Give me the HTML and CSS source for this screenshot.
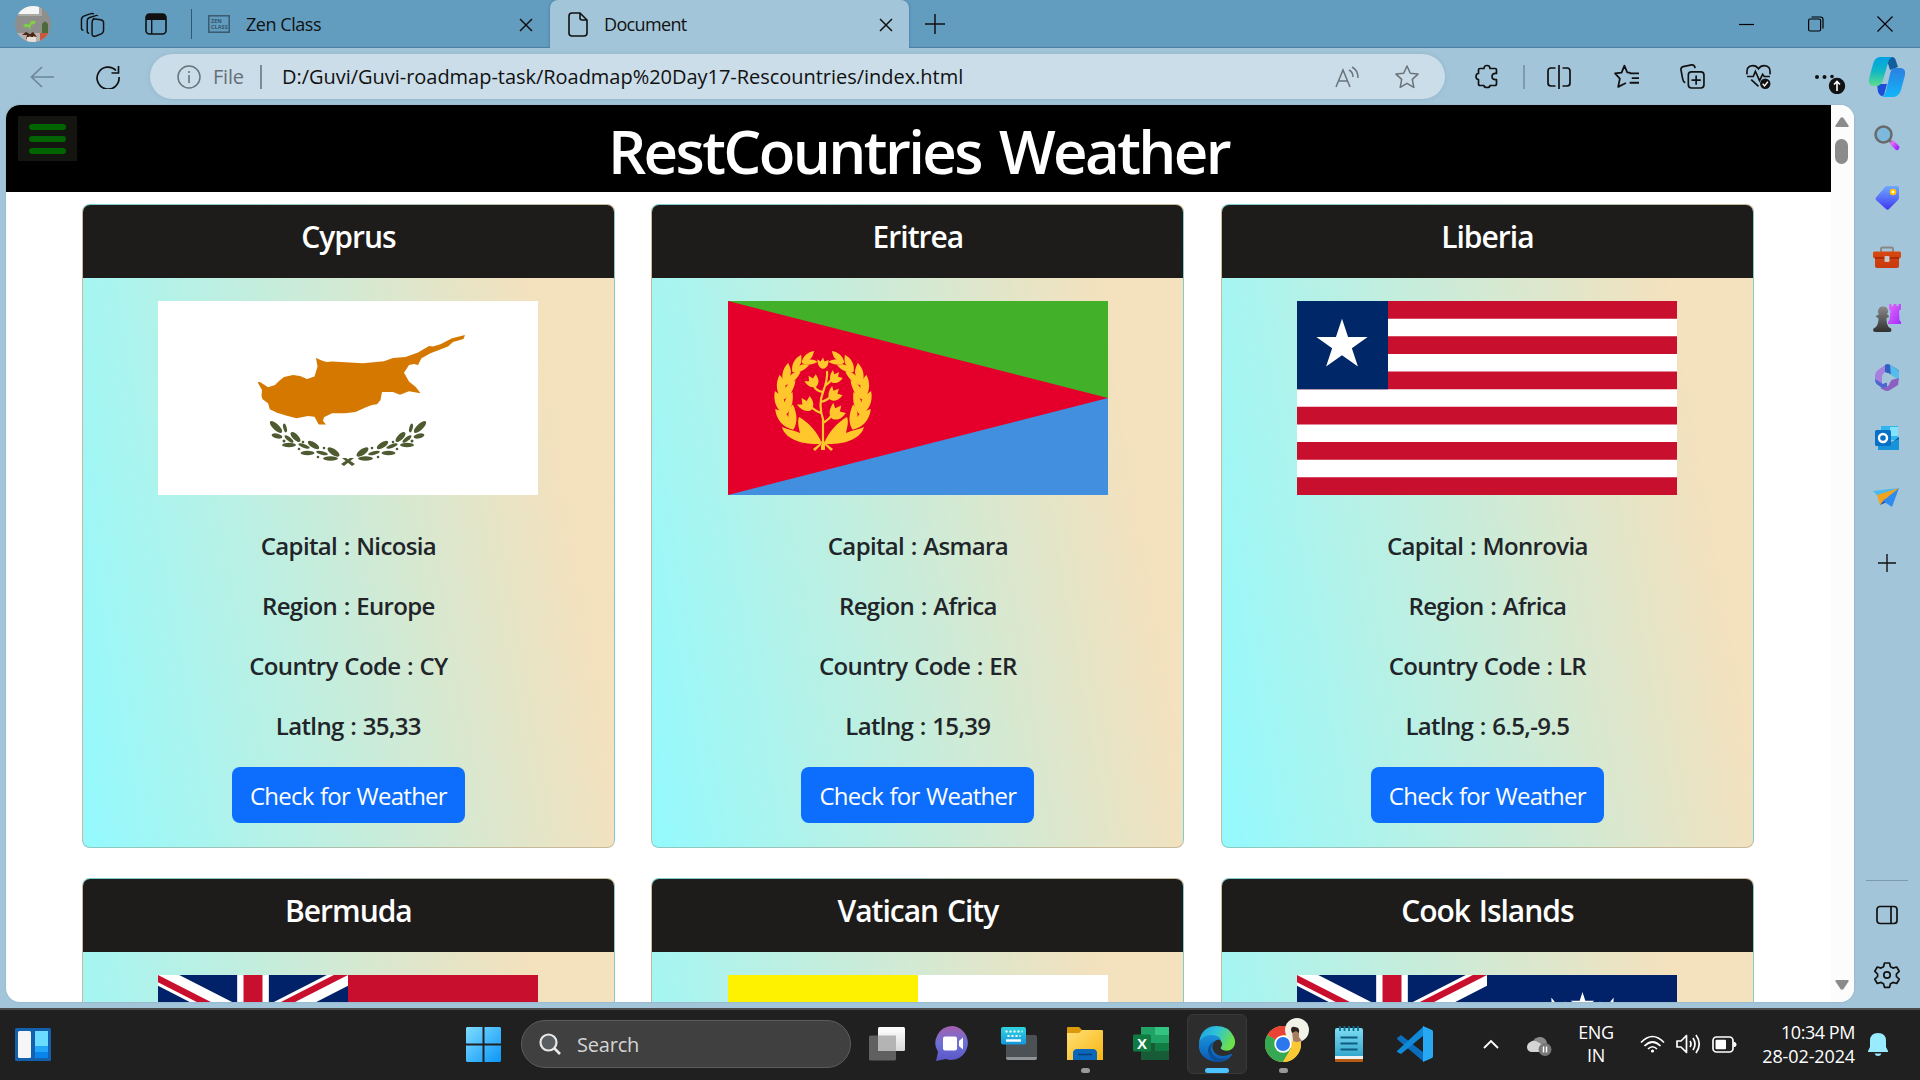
FILE: index.html
```
<!DOCTYPE html>
<html lang="en">
<head>
<meta charset="utf-8">
<title>Document</title>
<link rel="stylesheet" href="styles.css">
</head>
<body>
<svg class="defs" aria-hidden="true">
  <defs>
    <linearGradient id="g-task" x1="0" y1="0" x2="0" y2="1"><stop offset="0" stop-color="#fff"/><stop offset="1" stop-color="#d8d8d8"/></linearGradient>
    <linearGradient id="g-win" x1="0" y1="0" x2="1" y2="1"><stop offset="0" stop-color="#7fdcff"/><stop offset="1" stop-color="#0a96f8"/></linearGradient>
    <linearGradient id="g-teams" x1="0" y1="0" x2="0" y2="1"><stop offset="0" stop-color="#a45fae"/><stop offset=".5" stop-color="#6d70d6"/><stop offset="1" stop-color="#5a55c8"/></linearGradient>
    <linearGradient id="g-key" x1="0" y1="0" x2="0" y2="1"><stop offset="0" stop-color="#2fd3de"/><stop offset="1" stop-color="#1697dd"/></linearGradient>
    <linearGradient id="g-folder" x1="0" y1="0" x2="1" y2="1"><stop offset="0" stop-color="#ffe07a"/><stop offset="1" stop-color="#f8b60e"/></linearGradient>
    <linearGradient id="g-edge" x1="0" y1="0" x2="1" y2=".4"><stop offset="0" stop-color="#1b9de2"/><stop offset=".5" stop-color="#2fc3d8"/><stop offset="1" stop-color="#6be04a"/></linearGradient>
    <linearGradient id="g-edge2" x1="0" y1="0" x2="0" y2="1"><stop offset="0" stop-color="#1993dd"/><stop offset="1" stop-color="#0a58b0"/></linearGradient>
    <linearGradient id="g-note" x1="0" y1="0" x2="0" y2="1"><stop offset="0" stop-color="#7edcf3"/><stop offset="1" stop-color="#35a8cd"/></linearGradient>
    <linearGradient id="g-cop1" x1="0" y1="0" x2="0" y2="1"><stop offset="0" stop-color="#00a0e4"/><stop offset=".5" stop-color="#10b8c4"/><stop offset="1" stop-color="#5fdc8c"/></linearGradient>
    <linearGradient id="g-cop2" x1="0" y1="0" x2="0" y2="1"><stop offset="0" stop-color="#2c7fe0"/><stop offset="1" stop-color="#12b6fb"/></linearGradient>
    <linearGradient id="g-purple" x1="0" y1="0" x2="1" y2="1"><stop offset="0" stop-color="#e26bf8"/><stop offset="1" stop-color="#a52cff"/></linearGradient>
    <linearGradient id="g-tag" x1="0" y1="0" x2="0" y2="1"><stop offset="0" stop-color="#6fa8ff"/><stop offset="1" stop-color="#4038f0"/></linearGradient>
    <linearGradient id="g-box" x1="0" y1="0" x2="0" y2="1"><stop offset="0" stop-color="#d9480f"/><stop offset="1" stop-color="#c8390c"/></linearGradient>
    <linearGradient id="g-pawn" x1="0" y1="0" x2="0" y2="1"><stop offset="0" stop-color="#8a8a8a"/><stop offset="1" stop-color="#303030"/></linearGradient>
    <symbol id="star" viewBox="-10 -10 20 20"><path fill="#fff" d="M0-10 2.25-3.1 9.5-3.1 3.65 1.2 5.9 8.1 0 3.85-5.9 8.1-3.65 1.2-9.5-3.1-2.25-3.1z"/></symbol>
    <symbol id="jack" viewBox="0 0 60 30" preserveAspectRatio="none">
      <clipPath id="c-jack"><path d="M30 15h30v15zv15H0zH0V0zV0h30z"/></clipPath>
      <path fill="#012169" d="M0 0h60v30H0z"/>
      <path stroke="#fff" stroke-width="6" d="M0 0 60 30M60 0 0 30"/>
      <path stroke="#c8102e" stroke-width="4" clip-path="url(#c-jack)" d="M0 0 60 30M60 0 0 30"/>
      <path stroke="#fff" stroke-width="10" d="M30 0v30M0 15h60"/>
      <path stroke="#c8102e" stroke-width="6" d="M30 0v30M0 15h60"/>
    </symbol>
    <symbol id="close" viewBox="0 0 14 14"><path d="M1 1 13 13M13 1 1 13" fill="none" stroke="#111" stroke-width="1.5"/></symbol>
    <g id="olive" fill="#4e5b31">
      <ellipse rx="8" ry="3" transform="translate(118 126) rotate(43)"/>
      <ellipse rx="4.5" ry="1.7" transform="translate(127 127) rotate(75)"/>
      <ellipse rx="5.5" ry="2.4" transform="translate(119 135) rotate(14)"/>
      <ellipse rx="5.5" ry="2" transform="translate(131 138) rotate(38)"/>
      <ellipse rx="6.5" ry="2.8" transform="translate(137.5 136) rotate(45)"/>
      <ellipse rx="7" ry="2.2" transform="translate(131 144)"/>
      <ellipse rx="6" ry="1.8" transform="translate(146 145) rotate(20)"/>
      <ellipse rx="6.5" ry="2.8" transform="translate(155.5 144) rotate(32)"/>
      <ellipse rx="7" ry="2.2" transform="translate(149.5 152)"/>
      <ellipse rx="6" ry="1.8" transform="translate(164 152) rotate(14)"/>
      <ellipse rx="7" ry="3" transform="translate(175.5 151) rotate(35)"/>
      <ellipse rx="7.5" ry="2.2" transform="translate(172.5 157.5)"/>
      <circle cx="126" cy="140" r="1.5"/><circle cx="145" cy="141" r="1.3"/><circle cx="141" cy="148" r="1.3"/><circle cx="166" cy="147" r="1.3"/><circle cx="160" cy="156" r="1.3"/>
      <path d="m184 157 4 0 9 6-3 2z"/>
    </g>
    <path id="leaf" d="M0 8C-7 3-9-6-6-14-2-10 1-8 1-3 3-8 6-10 9-11 9-3 6 5 0 8z"/>
    <g id="wreath">
      <path d="M94 143C74 144 57 138 54 126 60 129 66 129 72 132 71 127 69 121 71 116 80 121 90 131 94 143z"/>
      <use href="#leaf" transform="translate(61 120) rotate(-26) scale(1.2)"/>
      <use href="#leaf" transform="translate(56 105) rotate(-8) scale(1.15)"/>
      <use href="#leaf" transform="translate(56 90) rotate(8) scale(1.1)"/>
      <use href="#leaf" transform="translate(60 77) rotate(24) scale(1)"/>
      <use href="#leaf" transform="translate(69 66) rotate(42) scale(.85)"/>
      <use href="#leaf" transform="translate(79 59) rotate(62) scale(.75)"/>
    </g>
    <path id="bud" d="M0 6C-5 5-7 0-7-6L-3-3 0-8 2-3 7-5C7 1 5 5 0 6z"/>
  </defs>
</svg>

<header class="tabstrip">
  <svg class="avatar" viewBox="0 0 36 36"><clipPath id="c-av"><circle cx="18" cy="18" r="18"/></clipPath><g clip-path="url(#c-av)"><path fill="#8e8e8c" d="M0 0h36v36H0z"/><path fill="#f4f6f5" d="M3 0h22v9H3z"/><path fill="#a9a9a6" d="M24 0h3v10H3V8h21z"/><path fill="#b8b2ae" d="M0 27h36v9H0z"/><path fill="#c8593e" d="M25 27h10v9H25z"/><path fill="#4c6a3a" d="M27 18q3-5 6 0v9h-6z"/><path fill="#7fd042" d="M8 20q3-4 6-1l2-4q4-1 5 1-2 3-5 3l-1 6-1-4q-3 1-6-1z"/><path fill="#4a2518" d="m7 29 4-3 4 2 3-2 4 5-4-1 1 4-4-4-4 3 1-4z"/><path fill="#e7dfd6" d="M12 31h9v5h-9z"/></g></svg>
  <svg class="workspaces" viewBox="0 0 26 26" fill="none" stroke="#111" stroke-width="1.5"><path d="m14 7 8 1q3 .5 3 3v8q0 3-3 4l-5 2q-4 1-4-2V11q0-3 2-4" transform="translate(-1 0)"/><path d="M18 4q-1-1-3 0L9 6Q7 7 7 9v11q0 2 2 2M14 2q-2-1-4 0L4 4Q1 5 1 8v9q0 2 2 2"/></svg>
  <svg class="tabmenu" viewBox="0 0 22 22"><rect x="1" y="1" width="20" height="20" rx="3.5" fill="none" stroke="#111" stroke-width="1.6"/><path d="M1 7V4q0-3 3-3h14q3 0 3 3v3zM6 7h1.400v14H6z" fill="#111"/></svg>
  <span class="vline"></span>
  <div class="tab">
    <svg class="zenicon" viewBox="0 0 22 18"><rect x=".8" y=".8" width="20.400" height="16.400" fill="none" stroke="#35556a" stroke-width="1.400"/><text x="3" y="7.800" class="zentext">ZEN</text><text x="3" y="14.200" class="zentext">CLASS</text></svg>
    <span class="tabname zen">Zen Class</span>
    <svg class="x" ><use href="#close"/></svg>
  </div>
  <div class="tab active">
    <svg class="docicon" viewBox="0 0 20 25"><path d="M4 1h8l7 7v13q0 3-3 3H4q-3 0-3-3V4q0-3 3-3zM12 1v5q0 2 2 2h5" fill="none" stroke="#111" stroke-width="1.600"/></svg>
    <span class="tabname doc">Document</span>
    <svg class="x"><use href="#close"/></svg>
  </div>
  <svg class="newtab" viewBox="0 0 20 20"><path d="M10 0v20M0 10h20" stroke="#111" stroke-width="1.500"/></svg>
  <div class="winbuttons">
    <svg viewBox="0 0 16 16"><path d="M0 8.500h15" stroke="#000" stroke-width="1.200"/></svg>
    <svg viewBox="0 0 16 16" fill="none" stroke="#000" stroke-width="1.200"><rect x=".6" y="3" width="12" height="12" rx="1.500"/><path d="M3.500 1h9q2.500 0 2.500 2.500v9"/></svg>
    <svg viewBox="0 0 16 16"><path d="m.5.500 15 15m0-15-15 15" stroke="#000" stroke-width="1.200"/></svg>
  </div>
</header>

<div class="toolbar">
  <svg class="back" viewBox="0 0 24 22"><path d="M12 1 1.500 11 12 21M2 11h22" fill="none" stroke="#6c8797" stroke-width="1.700"/></svg>
  <svg class="reload" viewBox="0 0 24 24"><path d="M20 5.500A11 11 0 1 0 23 12M22.500 1v7H15.500" fill="none" stroke="#111" stroke-width="1.700"/></svg>
  <div class="address">
    <svg class="info" viewBox="0 0 24 24"><circle cx="12" cy="12" r="11" fill="none" stroke="#6a747a" stroke-width="1.500"/><path d="M12 10v8M12 6v2" stroke="#6a747a" stroke-width="1.600"/></svg>
    <span class="scheme">File</span>
    <span class="sep"></span>
    <span class="url">D:/Guvi/Guvi-roadmap-task/Roadmap%20Day17-Rescountries/index.html</span>
    <svg class="read" viewBox="0 0 24 22" fill="none" stroke="#6a7379" stroke-width="1.500"><path d="m1 21 7-17 7 17M3.500 15h9M14 4q4 2 4 7M17 1q6 3 6 11"/></svg>
    <svg class="fav" viewBox="0 0 24 24" fill="none" stroke="#6a7379" stroke-width="1.500" stroke-linejoin="round"><path d="m12 1 3.300 7.300 7.700.8-5.700 5.300 1.500 8L12 18.300l-6.800 4.100 1.500-8L1 9.100l7.700-.8z"/></svg>
  </div>
  <svg class="ext" viewBox="0 0 24 24" fill="none" stroke="#111" stroke-width="1.700" stroke-linejoin="round"><path d="M5 4h4q0-3 3-3t3 3h5q1.500 0 1.500 1.500V9Q17 8.500 17 12t4.500 3v4q0 2-1.500 2h-5q0 2-3 2t-3-2H5q-1.500 0-1.500-2v-4Q1 15 1 12t2.500-3V5.500Q3.500 4 5 4z"/></svg>
  <span class="sep light"></span>
  <svg class="split" viewBox="0 0 24 24" fill="none" stroke="#111" stroke-width="1.700"><path d="M8.500 3H4Q1 3 1 6v12q0 3 3 3h4.500M15.500 3H20q3 0 3 3v12q0 3-3 3h-4.500M12 0v24"/></svg>
  <svg class="favs" viewBox="0 0 24 24" fill="none" stroke="#111" stroke-width="1.700" stroke-linejoin="round"><path d="M16 8.500 12.700 8 10 1.500 7.300 8.300 1 9l4.600 5L4 22l6-3 1.500-.8M15 9h9M17 13.500h7M15 18h9"/></svg>
  <svg class="coll" viewBox="0 0 24 24" fill="none" stroke="#111" stroke-width="1.600"><rect x="8" y="7.500" width="15" height="15.500" rx="3"/><path d="M15.500 11v9M11 15.400h9M5 18q-2-1-2.500-4L1 6q-.5-3 2-3.500L11 .9q3-.3 3.500 3"/></svg>
  <svg class="heart" viewBox="0 0 24 24" fill="none" stroke="#111" stroke-width="1.600"><path d="M1 10Q0 1.500 6.500 1.500q3.500 0 5.500 3 2-3 5.500-3Q24 1.500 23 10M1 12h6l2-5 4 9 3-6 1.500 2H23M5 15l7 6.500"/><circle cx="18.500" cy="19" r="5" fill="#111" stroke="none"/><path stroke="#fff" stroke-width="1.300" d="m16 19 1.800 2 3.200-4"/></svg>
  <svg class="more" viewBox="0 0 32 28"><g fill="#111"><circle cx="3" cy="11" r="2"/><circle cx="10.500" cy="11" r="2"/><circle cx="18" cy="10.500" r="1.800"/><circle cx="23" cy="20" r="8.200"/></g><path d="M23 25v-9.500m-3 3 3-3 3 3" fill="none" stroke="#fff" stroke-width="1.600"/></svg>
  <svg class="copilot" viewBox="0 0 36 40"><path fill="#125f9e" d="M17 0h6q3 0 4 4l2 6-8 3z"/><path fill="#1c4fd8" d="M8 27h10l-3 11q-3 3-6-3z"/><path fill="url(#g-cop1)" d="M11 0h12q-3 2-4 6l-5 17q-2 6-7 6H5q-6 0-5-7L4 7Q6 0 11 0z"/><path fill="url(#g-cop2)" d="M25 11h6q6 0 5 7l-4 15q-2 6-7 7H13q3-2 4-6l4-17q1-5 4-6z"/></svg>
</div>

<div class="workspace">
  <main class="page">
    <div class="content">
      <div class="banner">
        <span class="burger"><i></i><i></i><i></i></span>
        <h1>RestCountries Weather</h1>
      </div>
      <div class="cards">
        <section class="card">
          <h2>Cyprus</h2>
          <svg class="flag" viewBox="0 0 380 194" preserveAspectRatio="none"><path fill="#fff" d="M0 0h380v194H0z"/><path fill="#d57800" d="M99.600 81.300 102 81 110 86.300 117 84 121 80 126 76 135 74 142 75 149 78 156.500 75.500 159.500 65.500 158 57 165 60 169 61 174 60.500 183 61 205 62.300 226 60.300 235 57 247.500 56 260 51.500 271 45 275 45.500 283 43 294 37.300 307 34 305.500 38 295 41 290 45.500 272.500 52.300 263.500 57.300 260 64 256 63 251 64 246 71.700 251 80.500 258 86.300 262.500 92.300 251 90.300 242 93.700 235 91 224 91 222.500 99 219 103.300 214 104 208 106.300 197.500 111 187 112.300 174 112.300 166 116.300 165 120 168 123.500 160.700 123.500 156.500 115.700 150 115 138.500 117.300 128 114.500 119 111.700 111.800 108.300 110 102.300 104.600 98.300 103.500 95 104 89z"/><use href="#olive"/><use href="#olive" transform="matrix(-1 0 0 1 380 0)"/></svg>
          <p>Capital : Nicosia</p><p>Region : Europe</p><p>Country Code : CY</p><p>Latlng : 35,33</p>
          <button>Check for Weather</button>
        </section>
        <section class="card">
          <h2>Eritrea</h2>
          <svg class="flag" viewBox="0 0 380 194" preserveAspectRatio="none"><path fill="#43b02a" d="M0 0h380v97H0z"/><path fill="#418fde" d="M0 97h380v97H0z"/><path fill="#e4002b" d="M0 0 380 97 0 194z"/>
            <g fill="#ffc72c"><use href="#wreath"/><use href="#wreath" transform="matrix(-1 0 0 1 190 0)"/>
              <path d="m93 140 2 0 10 8-2 2zM97 140l-2 0-10 8 2 2zM93 142h4v7h-4z"/>
              <path d="M95 145V118Q90 104 95 91T99 70M95 122q8-5 9-9M93 112q-6-2-12-8M93 101q7-2 10-6M95 91q-7-1-9-6M97 85q5-4 9-9" fill="none" stroke="#ffc72c" stroke-width="2.200"/>
              <use href="#bud" transform="translate(95 63) scale(.8)"/><use href="#bud" transform="translate(107 77) rotate(35) scale(.9)"/><use href="#bud" transform="translate(85 81) rotate(-35) scale(.95)"/><use href="#bud" transform="translate(106 94) rotate(38)"/><use href="#bud" transform="translate(79 104) rotate(-38) scale(1.100)"/><use href="#bud" transform="translate(108 112) rotate(35) scale(1.150)"/>
            </g></svg>
          <p>Capital : Asmara</p><p>Region : Africa</p><p>Country Code : ER</p><p>Latlng : 15,39</p>
          <button>Check for Weather</button>
        </section>
        <section class="card">
          <h2>Liberia</h2>
          <svg class="flag" viewBox="0 0 380 198" preserveAspectRatio="none"><path fill="#fff" d="M0 0h380v198H0z"/><path stroke="#c8102e" stroke-width="18" d="M0 9h380M0 45h380M0 81h380M0 117h380M0 153h380M0 189h380"/><path fill="#002868" d="M0 0h91v90H0z"/><use href="#star" x="18" y="18" width="54" height="54"/></svg>
          <p>Capital : Monrovia</p><p>Region : Africa</p><p>Country Code : LR</p><p>Latlng : 6.5,-9.5</p>
          <button>Check for Weather</button>
        </section>
        <section class="card">
          <h2>Bermuda</h2>
          <svg class="flag" viewBox="0 0 380 194" preserveAspectRatio="none"><path fill="#c8102e" d="M0 0h380v194H0z"/><use href="#jack" width="190" height="97"/></svg>
        </section>
        <section class="card">
          <h2>Vatican City</h2>
          <svg class="flag" viewBox="0 0 380 194" preserveAspectRatio="none"><path fill="#fff" d="M0 0h380v194H0z"/><path fill="#fff200" d="M0 0h190v194H0z"/></svg>
        </section>
        <section class="card">
          <h2>Cook Islands</h2>
          <svg class="flag" viewBox="0 0 380 194" preserveAspectRatio="none"><path fill="#012169" d="M0 0h380v194H0z"/><use href="#jack" width="190" height="97"/><use href="#star" x="273" y="17" width="25" height="25"/><use href="#star" x="246" y="22" width="25" height="25" transform="rotate(-20 258 34)"/><use href="#star" x="300" y="22" width="25" height="25" transform="rotate(20 313 34)"/></svg>
        </section>
      </div>
    </div>
    <div class="scroll"><svg viewBox="0 0 14 10"><path fill="#8b8b8b" d="M5.500 1Q7-.5 8.500 1l5 7.500q.5 1.500-1 1.500h-11Q0 10 .5 8.500z"/></svg><i></i><svg class="down" viewBox="0 0 14 10"><path fill="#8b8b8b" d="M5.500 1Q7-.5 8.500 1l5 7.500q.5 1.500-1 1.500h-11Q0 10 .5 8.500z"/></svg></div>
  </main>
  <aside class="sidebar">
    <svg viewBox="0 0 30 30"><path stroke="url(#g-purple)" stroke-width="5" stroke-linecap="round" d="m20.500 20 4.500 4.500"/><path stroke="#777" stroke-width="3" d="m16 16 3 3"/><circle cx="11.500" cy="11.500" r="8" fill="#7db9dc" stroke="#6a6a6a" stroke-width="2.500"/></svg>
    <svg viewBox="0 0 30 30"><path fill="url(#g-tag)" d="M15 3h10q2 0 2 2v10q0 1-1 2l-9 9q-1.500 1.500-3 0L4 17q-1-1.500 0-2.500L13 4q1-1 2-1z"/><circle cx="21" cy="9" r="2.300" fill="#fff" stroke="#ffc400" stroke-width="2"/></svg>
    <svg viewBox="0 0 30 30"><path d="M9 9V6q0-1.500 1.500-1.500h9Q21 4.500 21 6v3" fill="none" stroke="#888" stroke-width="2"/><path fill="url(#g-box)" d="M1 10q0-1.500 1.500-1.500h25Q29 8.500 29 10v4l-2 2v7q0 2-2 2H5q-2 0-2-2v-7l-2-2z"/><path fill="#a82c08" d="M3 14h24v2H3z"/><rect x="12.500" y="13" width="5" height="6" rx="1" fill="#c8c8c8"/></svg>
    <svg viewBox="0 0 30 30"><path fill="url(#g-purple)" d="M17 1h2.500v2h2V1h3v2h2V1H29v5l-2 2 .5 9 1.500 2v2H16v-2l1.500-2 1-9L17 6z"/><g fill="url(#g-pawn)"><path d="M11 3.500a4.600 4.600 0 0 1 4 7.500l2 2q0 2-2.500 2 0 6 2 9 3 1 3 3 0 2-2 2h-14q-2.500 0-2.500-2t3-3q2.500-3 2.500-9Q4 15 4 13l3-2a4.600 4.600 0 0 1 4-7.500z"/></g></svg>
    <svg viewBox="0 0 30 30"><path fill="#315fc4" d="M13 2q3-2 5 0l7 4q2 1 2 4v5L13 9z"/><path fill="#54bdea" d="M18 2q8 4 9 7v8l-8-5z"/><path fill="#a681dc" d="M13 2v7q-3 2-3 6v9l-4-2q-3-2-3-5v-5q0-3 3-5z"/><path fill="#4c67cf" d="m3 16 8 5 4-2v6q-2 2-5 0l-4-3q-3-2-3-6z"/><path fill="#8d60bf" d="m27 15-1 7-8 5q-3 2-6 0l-4-2q7 0 9-3l2-5z"/><circle cx="15" cy="15" r="5" fill="#a3c5d9"/></svg>
    <svg viewBox="0 0 30 30"><path fill="#31b5ef" d="M9 3h17v14H9z"/><path fill="#84e3fb" d="M18 4h8v9h-8z"/><path fill="#0a4e94" d="m27 14-9 7 9 6z"/><path fill="#1793dc" d="m6 17 10 3 11-4v11H6z"/><rect x="3" y="7" width="16" height="16" rx="1.500" fill="#0871c6"/><circle cx="11" cy="15" r="4" fill="none" stroke="#fff" stroke-width="2.400"/></svg>
    <svg viewBox="0 0 30 30"><path fill="#47baf0" d="m1 8 26-3-21 8z"/><path fill="#f0a320" d="m5 12 22-7L8 22z"/><path fill="#1553b5" d="m8 22 5-6 2 3z"/><path fill="#2f8bee" d="m27 5-7 19-9-6z"/></svg>
    <svg class="add" viewBox="0 0 30 30"><path d="M15 6v18M6 15h18" stroke="#111" stroke-width="1.400"/></svg>
    <span class="hline"></span>
    <svg viewBox="0 0 30 30" fill="none" stroke="#111" stroke-width="1.700"><rect x="5" y="6.500" width="20" height="17" rx="3"/><path d="M19 6.500v17"/></svg>
    <svg viewBox="-15 -15 30 30" fill="none" stroke="#111" stroke-width="1.700" stroke-linejoin="round"><path d="M-2.500-12h5l1 3.700 2.500 1.400 3.700-1.100 2.500 4.300L9.400-1v2.500l2.800 2.700-2.500 4.300L6 7.400 3.500 8.800l-1 3.500h-5l-1-3.500L-6 7.400l-3.700 1.100-2.500-4.300 2.800-2.700V-1l-2.800-2.700L-9.700-8-6-6.900l2.500-1.400z"/><circle r="3.200"/></svg>
  </aside>
</div>

<footer class="taskbar">
  <svg class="widgets" viewBox="0 0 36 33"><rect width="36" height="33" rx="1.500" fill="#1360ad"/><rect x="3" y="3" width="13" height="27" rx="1.500" fill="#f6f6f6"/><path fill="#6adcff" d="M20 3h13v15H20z"/><path fill="#22a6f7" d="M20 18h13v6H20z"/><path fill="#0a84ea" d="M20 24h13v6H20z"/></svg>
  <svg class="start" viewBox="0 0 35 35"><path fill="url(#g-win)" d="M1 0h15.500v16.500H0V1zM18.500 0H34l1 1v15.500H18.500zM0 18.500h16.500V35H1l-1-1zM18.500 18.500H35V34l-1 1H18.500z"/></svg>
  <div class="searchbox"><svg viewBox="0 0 22 22"><circle cx="9.500" cy="9.500" r="8" fill="#5a5e60" stroke="#e8e8e8" stroke-width="2.200"/><path d="m15 15 6 6" stroke="#e8e8e8" stroke-width="2.600"/></svg><span>Search</span></div>
  <div class="apps">
    <span class="app"><svg viewBox="0 0 36 36"><rect y="9.500" width="27" height="25" rx="1.500" fill="#606060"/><rect x="9" y="1" width="27" height="24" rx="1.500" fill="url(#g-task)"/><path fill="#b4b4b4" d="M9 9.500h18V25H9z"/></svg></span>
    <span class="app"><svg viewBox="0 0 36 36"><path fill="url(#g-teams)" d="M18 0a16.500 17 0 1 1-7 33L1 35l2-9A17 17 0 0 1 18 0z"/><rect x="8" y="10.500" width="14" height="14" rx="2" fill="#fff"/><path fill="#fff" d="m24 15 4-3.500v12L24 20z"/></svg></span>
    <span class="app"><svg viewBox="0 0 36 36"><path fill="#4c5156" d="M5 9h29q2 0 2 2v20q0 3-2 3H7q-2 0-2-2z"/><path fill="#8e9498" d="M5 31h31q0 3-2 3H7q-2 0-2-3z"/><rect y="1" width="25" height="17.500" rx="2" fill="url(#g-key)"/><path stroke="#fff" stroke-width="2" stroke-dasharray="2 2" d="M4.500 5.500h17M6.500 10h13"/><path stroke="#fff" stroke-width="2.400" d="M5 14.500h15"/></svg></span>
    <span class="app run"><svg viewBox="0 0 36 36"><path fill="#dc9a0a" d="M0 2q0-1 1-1h11l4 4v5H0z"/><path fill="url(#g-folder)" d="M0 7h12l3-3h20q1 0 1 1v29H0z"/><path fill="#0b67b9" d="M6 34V26q1-3 4-3h16q3 0 4 3v8z"/><path stroke="#083f7a" stroke-width="1.500" d="M11 28.500h14"/></svg></span>
    <span class="app"><svg viewBox="0 0 36 36"><path fill="#21a366" d="M8 1h27q1 0 1 1v31q0 1-1 1H8z"/><path fill="#33c481" d="M22 1h13q1 0 1 1v7H22z"/><path fill="#107c41" d="M8 17h28v8H8z"/><path fill="#185c37" d="M8 17h14v8h14v8q0 1-1 1H8z"/><rect y="8.500" width="18" height="17" rx="1.500" fill="#0f7a41"/><text x="9" y="22.500" class="xl">X</text></svg></span>
    <span class="app current"><svg viewBox="0 0 36 36"><path fill="url(#g-edge)" d="M0 17Q2 0 18 0q12 0 17 11c4 10-4 16-11 13-5-2 0-3-1-7Q20 10 12 10 4 10 0 17z"/><path fill="url(#g-edge2)" d="M0 17Q3 9 12 9q8 0 10 5-4-1-6 1-5 5-1 11 6 7 17 2 1 0 1 1-5 7-14 7Q9 36 3 29-1 24 0 17z"/><path fill="#0c4e97" d="M16 15q-6 5-3 12 4 8 15 5-5 4-11 4Q9 31 9 24q1-7 7-9z"/></svg></span>
    <span class="app run"><svg viewBox="0 0 36 36"><circle cx="18" cy="18" r="18" fill="#fcc934"/><path fill="#ea4335" d="M18 18 2.400 9a18 18 0 0 1 31.200 0H18z"/><path fill="#34a853" d="M2.400 9a18 18 0 0 0 15.600 27l8-13.500-8-4.500z"/><path fill="#fcc934" d="m18 36 8-13.500L25 9h8.600A18 18 0 0 1 18 36z"/><circle cx="18" cy="18" r="8.700" fill="#fff"/><circle cx="18" cy="18" r="7" fill="#2b78ee"/></svg><svg class="badge" viewBox="0 0 24 24"><circle cx="12" cy="12" r="12" fill="#f3f2e8"/><path fill="#a97e5f" d="M7 13q3-4 7 0v6l3 4q-6 2-9 0z"/><path fill="#2c221c" d="M6 12q0-4 4-3 5 0 4 6l-3-2-4 2z"/></svg></span>
    <span class="app"><svg viewBox="0 0 36 36"><path fill="#b85c14" d="M4 31h28v4q0 1-1 1H5q-1 0-1-1z"/><path fill="#eef3f4" d="M4 28h28v5H4z"/><path fill="url(#g-note)" d="M4 4q0-2 2-2h24q2 0 2 2v26H4z"/><path stroke="#0c5d80" stroke-width="2.200" d="M9.500 11.500h17M9.500 17.500h17M9.500 23.500h17"/><path stroke="#0c7090" stroke-width="1.800" d="M9 0v5M13.500 0v5M18 0v5M22.500 0v5M27 0v5"/></svg></span>
    <span class="app"><svg viewBox="0 0 36 36"><path fill="#0a6ebd" d="m0 12 4-3L27 27v9L1 14q-1-1-1-2z"/><path fill="#0f8ad8" d="m0 25 27-25v9L4 28l-4-2z"/><path fill="#28a8f2" d="m26 0 9 4q1 .5 1 2v24q0 1.500-1 2l-9 4z"/></svg></span>
  </div>
  <div class="tray">
    <svg class="chev" viewBox="0 0 16 10"><path d="m1 9 7-7 7 7" fill="none" stroke="#fff" stroke-width="1.800"/></svg>
    <svg class="cloud" viewBox="0 0 25 20"><path fill="#8a8a8a" d="M5 7q3-7 9-6 5 1 6 6l-8 5z"/><path fill="#d4d4d4" d="M5 5q4-1 9 3l4 2-6 6H4q-4-1-4-5t5-6z"/><circle cx="18" cy="13.500" r="6.500" fill="#777"/><path stroke="#fff" stroke-width="1.500" d="M16.500 10.500v6M19.500 10.500v6"/></svg>
    <span class="lang">ENG<br>IN</span>
    <svg class="wifi" viewBox="0 0 25 18" fill="none" stroke="#fff" stroke-width="1.700"><path d="M1 7.500q11.500-12 23 0M4.500 11q8-8 16 0M8 14q4.500-4.500 9 0"/><circle cx="12.500" cy="16" r="1.600" fill="#fff" stroke="none"/></svg>
    <svg class="vol" viewBox="0 0 25 20" fill="none" stroke="#fff" stroke-width="1.700" stroke-linejoin="round"><path d="M1 7h4l5.500-5.500v17L5 13H1zM14 7q2 3 0 6M17 4q4 6 0 12M20 1q6.500 9 0 18"/></svg>
    <svg class="batt" viewBox="0 0 25 17"><rect x="1" y="1" width="20" height="15" rx="3.500" fill="none" stroke="#fff" stroke-width="1.700"/><rect x="3.500" y="3.800" width="10.500" height="9.500" rx="1" fill="#fff"/><path fill="#fff" d="M21.500 6h1.500q1.500 1 1.500 2.500T23 11h-1.500z"/></svg>
    <span class="clock"><span class="time">10:34 PM</span><br><span class="date">28-02-2024</span></span>
    <svg class="bell" viewBox="0 0 20 23"><path fill="#99ebff" d="M10 0q8 0 8 8v6l2 4v1H0v-1l2-4V8q0-8 8-8zM6.500 20.500h7q-1 2.500-3.500 2.500t-3.500-2.500z"/></svg>
  </div>
</footer>
</body>
</html>
```
FILE: styles.css
```
* { box-sizing: border-box; }
body {
  margin: 0;
  width: 1920px;
  height: 1080px;
  overflow: hidden;
  display: flex;
  flex-direction: column;
  background: #a3c5d9;
  color: #111;
  font-family: "Open Sans", "Noto Sans", sans-serif;
}
svg { display: block; flex: none; }
.defs { width: 0; height: 0; position: absolute; }

/* tab strip */
.tabstrip {
  height: 48px;
  flex: none;
  display: flex;
  align-items: center;
  background: #629dc0;
  padding-left: 15px;
  box-shadow: inset 0 -2px 1px -1px #4c809f;
}
.avatar { width: 36px; height: 36px; }
.workspaces { width: 26px; height: 25px; margin-left: 29px; }
.tabmenu { width: 22px; height: 22px; margin-left: 39px; }
.vline { width: 1px; height: 30px; background: #2d5b76; margin-left: 24px; }
.tab { display: flex; align-items: center; height: 48px; width: 359px; }
.vline + .tab { padding: 0 17px 0 16px; width: 358px; }
.tab .x { width: 14px; height: 14px; margin-left: auto; margin-top: 2px; }
.zenicon { width: 22px; height: 18px; }
.zentext { font: 700 5.600px "Open Sans", sans-serif; fill: #35556a; }
.tabname { font-size: 18px; line-height: 24px; white-space: nowrap; margin-top: -1px; }
.zen { letter-spacing: -.45px; margin-left: 16px; }
.doc { letter-spacing: -.65px; margin-left: 16px; }
.active {
  background: #a3c5d9;
  border-radius: 8px 8px 0 0;
  padding: 0 16px 0 18px;
  box-shadow: 0 0 3px #41718e;
  clip-path: inset(0 -4px 0 -4px);
}
.docicon { width: 20px; height: 25px; }
.newtab { width: 20px; height: 20px; margin-left: 16px; }
.winbuttons { margin-left: auto; display: flex; gap: 53px; padding-right: 27px; }
.winbuttons svg { width: 16px; height: 16px; }

/* toolbar */
.toolbar { height: 57px; flex: none; display: flex; align-items: center; padding-left: 30px; }
.back { width: 24px; height: 22px; }
.reload { width: 24px; height: 24px; margin-left: 42px; }
.address {
  width: 1295px;
  height: 45px;
  margin-left: 30px;
  border-radius: 23px;
  background: #cadde9;
  box-shadow: 0 0 5px #8fb4ca;
  display: flex;
  align-items: center;
  padding: 0 26px 0 27px;
}
.info, .fav { width: 24px; height: 24px; }
.scheme { font-size: 20px; color: #667076; margin-left: 12px; width: 32px; letter-spacing: -.2px; }
.sep { width: 2px; height: 24px; background: #7d8a91; margin-left: 15px; }
.url { font-size: 20px; margin-left: 20px; letter-spacing: -.03px; white-space: nowrap; }
.read { width: 24px; height: 22px; margin-left: auto; }
.fav { margin-left: 36px; }
.ext { width: 24px; height: 25px; margin-left: 30px; }
.light { background: #7c9cae; margin-left: 24px; }
.split { width: 24px; height: 24px; margin-left: 22px; }
.favs { width: 25px; height: 25px; margin-left: 43px; }
.coll { width: 25px; height: 25px; margin-left: 41px; }
.heart { width: 25px; height: 25px; margin-left: 41px; }
.more { width: 32px; height: 28px; margin: 6px 0 0 43px; }
.copilot { width: 36px; height: 40px; margin-left: 23px; }

/* browser window body */
.workspace { height: 903px; flex: none; display: flex; padding-left: 6px; }
.page {
  width: 1848px;
  height: 897px;
  background: #fff;
  border-radius: 14px;
  overflow: hidden;
  display: flex;
  box-shadow: 0 0 2px #7fa8c0;
}
.content { width: 1825px; overflow: hidden; }
.banner {
  height: 87px;
  background: #000;
  display: grid;
  grid-template-columns: 84px 1fr 84px;
  padding-top: 6px;
}
.burger {
  width: 59px;
  height: 45px;
  margin: 5px 0 0 12px;
  background: #141511;
  display: flex;
  flex-direction: column;
  align-items: center;
  gap: 6px;
  padding-top: 8px;
}
.burger i { width: 37px; height: 6px; border-radius: 3px; background: #006400; }
h1 {
  margin: 0;
  color: #fff;
  font-size: 60px;
  font-weight: 600;
  line-height: 81px;
  letter-spacing: -2.600px;
  word-spacing: 5px;
  text-align: center;
}
.cards {
  display: grid;
  grid-template-columns: repeat(3, 532.8px);
  column-gap: 36.700px;
  row-gap: 30px;
  padding: 12px 0 0 76px;
}
.card {
  height: 644px;
  border: 1px solid rgba(0, 0, 0, .175);
  border-radius: 8px;
  background: linear-gradient(80deg, #96f9fc 2%, #f4e1bd 85%);
  overflow: hidden;
  display: flex;
  flex-direction: column;
  align-items: center;
}
h2 {
  margin: 0 0 23px;
  align-self: stretch;
  height: 73px;
  padding-top: 14px;
  background: #1d1c1a;
  color: #fff;
  font-size: 30px;
  font-weight: 600;
  line-height: 36px;
  letter-spacing: -1px;
  word-spacing: 2px;
  text-align: center;
}
.flag { width: 380px; height: 194px; margin-bottom: 36px; }
.card p {
  margin: 0 0 30px;
  color: #212529;
  font-size: 24px;
  font-weight: 600;
  line-height: 30px;
  letter-spacing: -.650px;
  word-spacing: 1px;
}
.card button {
  width: 233px;
  height: 56px;
  margin-top: -4px;
  padding: 1px 0 0;
  border: 0;
  border-radius: 8px;
  background: #0d6efd;
  color: #fff;
  font: 24px/55px "Open Sans", sans-serif;
  letter-spacing: -.750px;
  word-spacing: 1px;
}
.scroll { width: 23px; background: #fcfcfc; display: flex; flex-direction: column; align-items: center; padding: 12px 2px 12px 0; }
.scroll svg { width: 14px; height: 10px; }
.scroll i { width: 13px; height: 25px; margin-top: 12px; border-radius: 7px; background: #8b8b8b; }
.scroll .down { transform: rotate(180deg); margin-top: auto; }

/* side pane */
.sidebar { width: 66px; display: flex; flex-direction: column; align-items: center; gap: 30px; padding-top: 18px; }
.sidebar svg { width: 30px; height: 30px; }
.sidebar .add { margin-top: 5px; }
.hline { width: 42px; height: 1px; background: #7c9cae; margin: auto 0 -11px; }
.sidebar svg:last-child { margin-bottom: 18px; }

/* taskbar */
.taskbar {
  height: 72px;
  flex: none;
  display: flex;
  align-items: center;
  background: #202020;
  border-top: 2px solid #4a4b4c;
  color: #fff;
  padding: 0 0 2px 15px;
}
.widgets { width: 36px; height: 33px; }
.start { width: 35px; height: 35px; margin-left: 415px; }
.searchbox {
  width: 330px;
  height: 48px;
  margin-left: 20px;
  border: 1px solid #5c5c5c;
  border-radius: 24px;
  background: #404040;
  display: flex;
  align-items: center;
  padding-left: 17px;
  color: #d4d4d4;
  font-size: 20px;
  letter-spacing: -.2px;
}
.searchbox svg { width: 22px; height: 22px; margin-right: 16px; }
.apps { display: flex; gap: 6px; margin-left: 6px; }
.app { width: 60px; height: 60px; border-radius: 6px; display: grid; place-items: center; position: relative; }
.app > svg { width: 36px; height: 36px; }
.current { background: #2d2d2e; border: 1px solid #393939; }
.run::after, .current::after {
  content: "";
  position: absolute;
  bottom: 1px;
  width: 9px;
  height: 5px;
  border-radius: 3px;
  background: #999;
}
.current::after { width: 24px; background: #4cc2ff; bottom: 0; }
.app > .badge { position: absolute; left: 32px; top: 4px; width: 24px; height: 24px; }
.xl { font: 700 15px "Liberation Sans", sans-serif; fill: #fff; text-anchor: middle; }
.tray { display: flex; align-items: center; margin-left: 38px; }
.chev { width: 16px; height: 10px; }
.cloud { width: 25px; height: 20px; margin-left: 28px; margin-top: 4px; }
.lang { font-size: 18px; line-height: 23px; text-align: center; width: 40px; margin-left: 24px; letter-spacing: -.3px; }
.wifi { width: 25px; height: 18px; margin-left: 24px; }
.vol { width: 25px; height: 20px; margin-left: 11px; }
.batt { width: 25px; height: 17px; margin-left: 11px; }
.clock { width: 100px; margin-left: 18px; text-align: right; font-size: 18px; line-height: 24px; }
.time { letter-spacing: -.450px; }
.date { letter-spacing: -.120px; }
.bell { width: 20px; height: 23px; margin-left: 13px; }
```
